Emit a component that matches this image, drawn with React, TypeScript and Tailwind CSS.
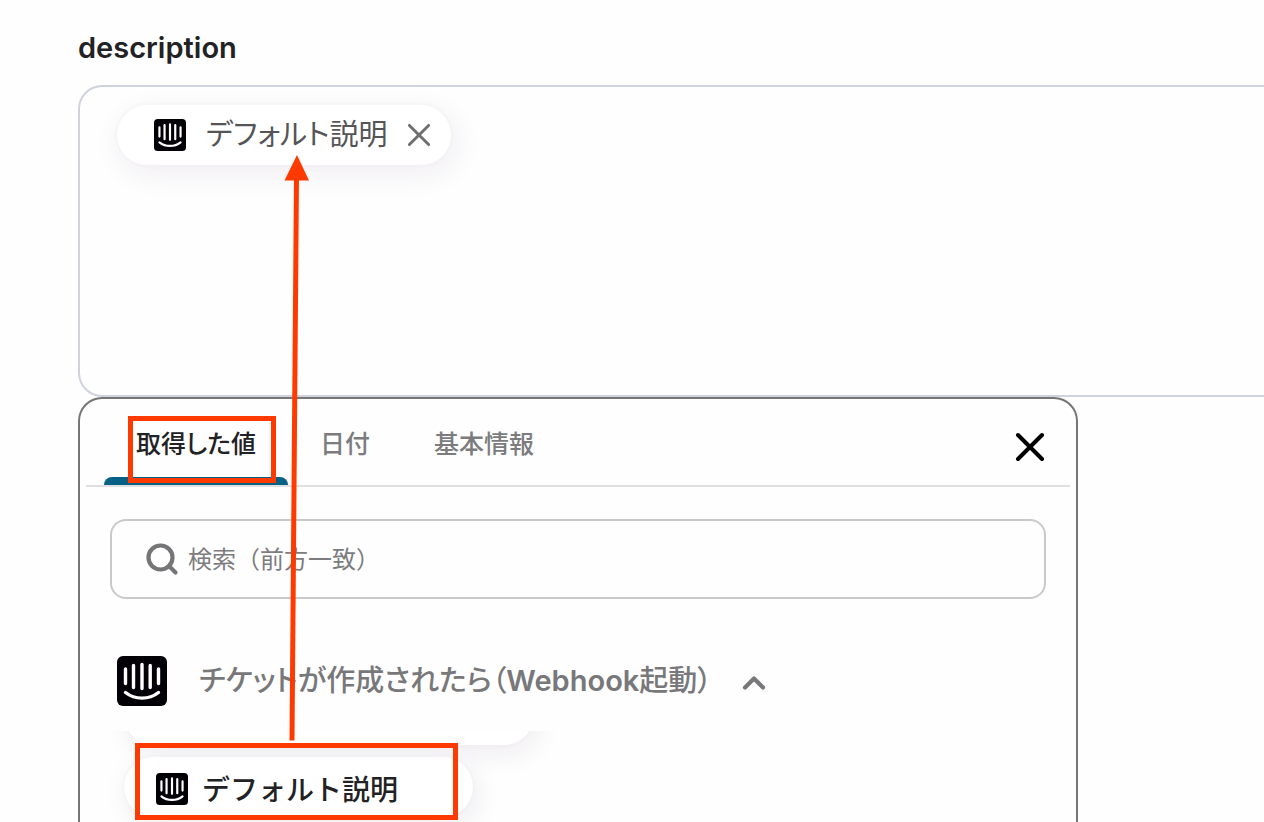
import { ChevronUp, Search, X } from 'lucide-react';

const tabs = ['取得した値', '日付', '基本情報'];

function IntercomLogo({ className }: { className: string }) {
  return (
    <svg viewBox="0 0 50 50" className={className} aria-hidden="true">
      <rect width="50" height="50" rx="6" fill="#020005" />
      <g fill="none" stroke="#fff" strokeWidth="3.4" strokeLinecap="round">
        <path d="M8.5 13V27.5M16.5 9.5V31.5M25 8.5V32.5M33.2 9.5V31.5M41.5 13V27.5" />
        <path d="M8.5 36.5C18 44 32 44 41.5 36.5" />
      </g>
    </svg>
  );
}

function Highlight({ className }: { className: string }) {
  return <span className={`pointer-events-none absolute z-10 border-5 border-[#ff3a00] ${className}`} />;
}

function DescriptionField() {
  return (
    <section>
      <h2 id="description-label" className="pt-7 text-[29px] leading-10 font-semibold text-[#222224]">
        description
      </h2>
      <div
        role="group"
        aria-labelledby="description-label"
        className="mt-[17px] h-[312px] rounded-l-3xl border-2 border-r-0 border-[#d0d2de] pt-[18px] pl-[37px]"
      >
        <div className="inline-flex h-[60px] items-center rounded-full bg-white pr-4 pl-[37px] shadow-[4px_8px_28px_2px_#f1eef2,0_0_4px_#efedf0]">
          <IntercomLogo className="size-8" />
          <span className="ml-5 text-[29px] leading-10 text-[#555557]">デフォルト説明</span>
          <button type="button" aria-label="削除" className="ml-4 text-[#6e6e70]">
            <X className="size-8" strokeWidth={1.8} viewBox="2 2 20 20" />
          </button>
        </div>
      </div>
    </section>
  );
}

function Tabs() {
  return (
    <div className="mx-1.5 flex border-b-2 border-[#e0e0e2] pl-[18px]">
      <div role="tablist" className="flex h-[86px]">
        {tabs.map((tab, i) => (
          <button
            key={tab}
            type="button"
            role="tab"
            aria-selected={i === 0}
            className={`relative px-8 pt-1.5 text-[25px] font-medium ${i === 0 ? 'text-[#222224]' : 'text-[#7c7c7e]'}`}
          >
            {tab}
            {i === 0 && (
              <>
                <span className="absolute inset-x-0 bottom-0 h-2 rounded-t-lg bg-[#066184]" />
                <Highlight className="top-[17px] right-3 left-6 h-[67px]" />
              </>
            )}
          </button>
        ))}
      </div>
      <button type="button" aria-label="閉じる" className="mt-2.5 mr-5 ml-auto text-black">
        <X className="size-10" strokeWidth={2} viewBox="2 2 20 20" />
      </button>
    </div>
  );
}

function ValuePicker() {
  return (
    <section className="w-full max-w-[1000px] overflow-hidden rounded-t-3xl border-2 border-b-0 border-[#767679]">
      <Tabs />

      <div className="px-[30px] pt-8">
        <label className="flex h-20 items-center rounded-2xl border-2 border-[#c9c9cb] pl-8">
          <Search className="size-9 text-[#757577]" strokeWidth={2.8} />
          <input
            type="search"
            aria-label="検索"
            placeholder="検索（前方一致）"
            className="ml-2 flex-1 pt-0.5 text-2xl outline-none [font-feature-settings:normal] placeholder:text-[#7c7c7e]"
          />
        </label>
      </div>

      <button type="button" className="mt-[57px] ml-[37px] flex items-center text-[#78787a]">
        <IntercomLogo className="size-[50px]" />
        <span className="ml-8 text-[29px] leading-10 font-medium">
          チケットが作成されたら（<span className="font-semibold">Webhook</span>起動）
        </span>
        <ChevronUp className="mt-1 ml-6 size-9" strokeWidth={2.8} />
      </button>

      {/* Scrolled list of values */}
      <ul className="mt-[25px] ml-[30px] h-40 overflow-hidden pl-3.5">
        <li className="-mt-[46px] h-[60px] w-[410px] rounded-full bg-white shadow-[4px_8px_28px_0_#eeebef,0_0_4px_#efedf0]" />
        <li className="relative mt-3 w-fit">
          <button
            type="button"
            className="flex h-[60px] w-[349px] items-center rounded-full bg-white pt-1 pl-8 shadow-[4px_8px_28px_0_#eeebef,0_0_4px_#efedf0]"
          >
            <IntercomLogo className="size-8" />
            <span className="ml-3.5 pt-0.5 text-[28px] leading-10 font-medium text-[#222224] [font-feature-settings:normal]">
              デフォルト説明
            </span>
          </button>
          <Highlight className="-top-3.5 right-[15px] left-[11px] h-[77px]" />
        </li>
      </ul>
    </section>
  );
}

function Arrow() {
  return (
    <svg
      viewBox="0 0 26 586"
      className="pointer-events-none absolute top-[155px] left-[284px] z-20 h-[586px] w-[26px]"
      aria-hidden="true"
    >
      <path d="M12.5 22L8 585.5" stroke="#ff3a00" strokeWidth="5" />
      <path d="M13 0L25 25.5H0.5Z" fill="#ff3a00" />
    </svg>
  );
}

function App() {
  return (
    <main
      lang="ja"
      className="relative h-screen overflow-hidden bg-[#fefefe] pl-[78px] font-['Inter','Noto_Sans_CJK_JP',sans-serif] [font-feature-settings:'palt']"
    >
      <DescriptionField />
      <ValuePicker />
      <Arrow />
    </main>
  );
}

export default App;
